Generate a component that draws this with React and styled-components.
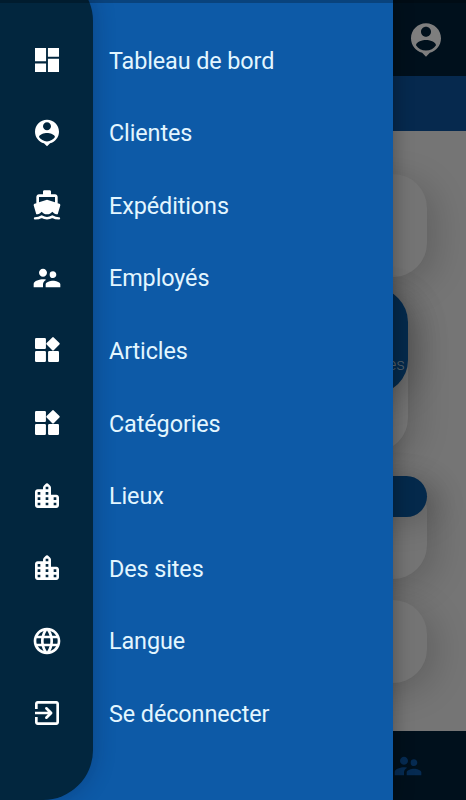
import React from 'react';
import styled, { createGlobalStyle } from 'styled-components';
import { MdSupervisorAccount, MdLanguage } from 'react-icons/md';

const GlobalStyle = createGlobalStyle`
* { box-sizing: border-box; }
body {
  margin: 0;
  font-family: Roboto, sans-serif;
}
`;

const Screen = styled.div`
position: relative;
width: 466px;
height: 800px;
overflow: hidden;
`;

const Page = styled.div`
height: 100%;
display: flex;
flex-direction: column;
background: #757575;
`;

const TopBar = styled.header`
height: 76px;
flex: none;
display: flex;
justify-content: flex-end;
padding: 20px 20px 0 0;
background: #00101c;
color: #7e7e7e;
`;

const Band = styled.div`
height: 55px;
flex: none;
background: #06294e;
`;

const Content = styled.main`
flex: 1;
display: flex;
flex-direction: column;
padding: 43px 39px 0;
`;

const Card = styled.section`
flex: none;
height: ${p => p.$height}px;
margin: 0 ${p => p.$inset || 0}px ${p => p.$gap || 0}px;
border-radius: 34px;
background: #747474;
box-shadow: 8px 8px 34px rgba(0, 0, 0, 0.18);
`;

const CardHead = styled.div`
height: ${p => p.$height}px;
padding: ${p => p.$top || 0}px 3px 0 0;
border-radius: ${p => p.$radius}px;
background: #04294b;
box-shadow: 10px 6px 30px rgba(0, 0, 0, 0.18);
color: #56626b;
font-size: 17px;
font-weight: 300;
line-height: 20px;
text-align: right;
`;

const BottomBar = styled.footer`
height: 69px;
flex: none;
display: flex;
justify-content: flex-end;
padding: 19px 42px 0 0;
background: #00101c;
color: #062b52;
`;

const Drawer = styled.aside`
position: absolute;
inset: 0 auto 0 0;
width: 393px;
display: flex;
background: #0d5aa7;
box-shadow: 0 0 18px rgba(0, 0, 0, 0.35);
clip-path: inset(0 -40px 0 0);
`;

const Rail = styled.div`
flex: none;
width: 93px;
height: 829px;
margin-top: -29px;
padding-top: 53px;
border-radius: 0 50px 50px 0;
background: #02263e;
box-shadow: 0 0 22px rgba(0, 20, 60, 0.3);
`;

const RailItem = styled.div`
height: 72.55px;
display: flex;
align-items: center;
justify-content: center;
color: #fff;
`;

const Menu = styled.nav`
flex: 1;
padding: 24.5px 0 0 16px;
`;

const MenuItem = styled.div`
height: 72.55px;
display: flex;
align-items: center;
color: #e3f6ff;
font-size: 23.4px;
letter-spacing: -0.1px;
white-space: nowrap;
`;

const StatusBar = styled.div`
position: absolute;
inset: 0 0 auto 0;
height: 3px;
background: rgba(0, 0, 0, 0.25);
`;

const Svg = ({ size = 32, children }) => (
  <svg width={size} height={size} viewBox="0 0 24 24" fill="currentColor">{children}</svg>
);

const Dashboard = () => (
  <Svg>
    <path d="M3 3h8.3v10H3zM3 14.6h8.3V21H3zM12.7 3H21v6.5h-8.3zM12.7 11.1H21V21h-8.3z" />
  </Svg>
);

const PersonPin = ({ size }) => (
  <Svg size={size}>
    <path d="M12 2c-4.97 0-9 4.03-9 9 0 4.17 2.84 7.67 6.69 8.69L12 22l2.31-2.31C18.16 18.67 21 15.17 21 11c0-4.97-4.03-9-9-9zm0 2c1.66 0 3 1.34 3 3s-1.34 3-3 3-3-1.34-3-3 1.34-3 3-3zm0 14.3c-2.5 0-4.71-1.28-6-3.22.03-1.99 4-3.08 6-3.08 1.99 0 5.97 1.09 6 3.08-1.29 1.94-3.5 3.22-6 3.22z" />
  </Svg>
);

const Boat = () => (
  <Svg>
    <path d="M3.95 19H4c1.6 0 3.02-.88 4-2 .98 1.12 2.4 2 4 2s3.02-.88 4-2c.98 1.12 2.4 2 4 2h.05l1.89-6.68c.08-.26.06-.54-.06-.78s-.34-.42-.6-.5L20 10.62V6c0-1.1-.9-2-2-2h-3V2c0-.55-.45-1-1-1h-4c-.55 0-1 .45-1 1v2H6c-1.1 0-2 .9-2 2v4.62l-1.29.42c-.26.08-.48.26-.6.5s-.15.52-.06.78L3.95 19zM6 6h12v3.97L12 8 6 9.97V6z" />
    <path d="M3 22c2 0 3.5-.4 5-1.3 2.5 1.5 5.5 1.5 8 0 1.5.9 3 1.3 5 1.3" fill="none" stroke="currentColor" strokeWidth="1.8" strokeLinecap="round" />
  </Svg>
);

const Widgets = () => (
  <Svg>
    <rect x="3" y="3" width="8.2" height="8.2" rx="0.9" />
    <rect x="3" y="12.8" width="8.2" height="8.2" rx="0.9" />
    <rect x="12.8" y="12.8" width="8.2" height="8.2" rx="0.9" />
    <rect x="12.7" y="3.6" width="7.6" height="7.6" rx="0.8" transform="rotate(45 16.5 7.4)" />
  </Svg>
);

const City = () => (
  <Svg>
    <path fillRule="evenodd" d="M15 11V5.8c0-.5-.2-1-.6-1.4l-1.7-1.7a1 1 0 0 0-1.4 0L9.6 4.4C9.2 4.8 9 5.3 9 5.8V7H5c-1.1 0-2 .9-2 2v10c0 1.1.9 2 2 2h14c1.1 0 2-.9 2-2v-6c0-1.1-.9-2-2-2h-4zM5 9h2v2H5zM5 13h2v2H5zM5 17h2v2H5zM11 5h2v2h-2zM11 9h2v2h-2zM11 13h2v2h-2zM11 17h2v2h-2zM17 13h2v2h-2zM17 17h2v2h-2z" />
  </Svg>
);

const Exit = () => (
  <Svg>
    <path d="M3 9V5c0-1.1.9-2 2-2h14c1.1 0 2 .9 2 2v14c0 1.1-.9 2-2 2H5c-1.1 0-2-.9-2-2v-4h2v4h14V5H5v4H3z" />
    <path d="M3 11h9.67l-1.88-1.88a1 1 0 0 1 1.41-1.41l3.59 3.59a1 1 0 0 1 0 1.4l-3.59 3.59a1 1 0 0 1-1.41-1.41L12.67 13H3v-2z" />
  </Svg>
);

const items = [
  { label: 'Tableau de bord', icon: <Dashboard /> },
  { label: 'Clientes', icon: <PersonPin /> },
  { label: 'Expéditions', icon: <Boat /> },
  { label: 'Employés', icon: <MdSupervisorAccount size={32} /> },
  { label: 'Articles', icon: <Widgets /> },
  { label: 'Catégories', icon: <Widgets /> },
  { label: 'Lieux', icon: <City /> },
  { label: 'Des sites', icon: <City /> },
  { label: 'Langue', icon: <MdLanguage size={32} /> },
  { label: 'Se déconnecter', icon: <Exit /> },
];

export default function App() {
  return (
    <Screen>
      <GlobalStyle />
      <Page>
        <TopBar><PersonPin size={40} /></TopBar>
        <Band />
        <Content>
          <Card $height={103} $gap={11} />
          <Card $height={164} $inset={19} $gap={24}>
            <CardHead $height={106} $radius={34} $top={66}>es</CardHead>
          </Card>
          <Card $height={103} $gap={21}>
            <CardHead $height={41} $radius={20.5} />
          </Card>
          <Card $height={83} />
        </Content>
        <BottomBar><MdSupervisorAccount size={32} /></BottomBar>
      </Page>
      <Drawer>
        <Rail>
          {items.map(item => <RailItem key={item.label}>{item.icon}</RailItem>)}
        </Rail>
        <Menu>
          {items.map(item => <MenuItem key={item.label}>{item.label}</MenuItem>)}
        </Menu>
      </Drawer>
      <StatusBar />
    </Screen>
  );
}
